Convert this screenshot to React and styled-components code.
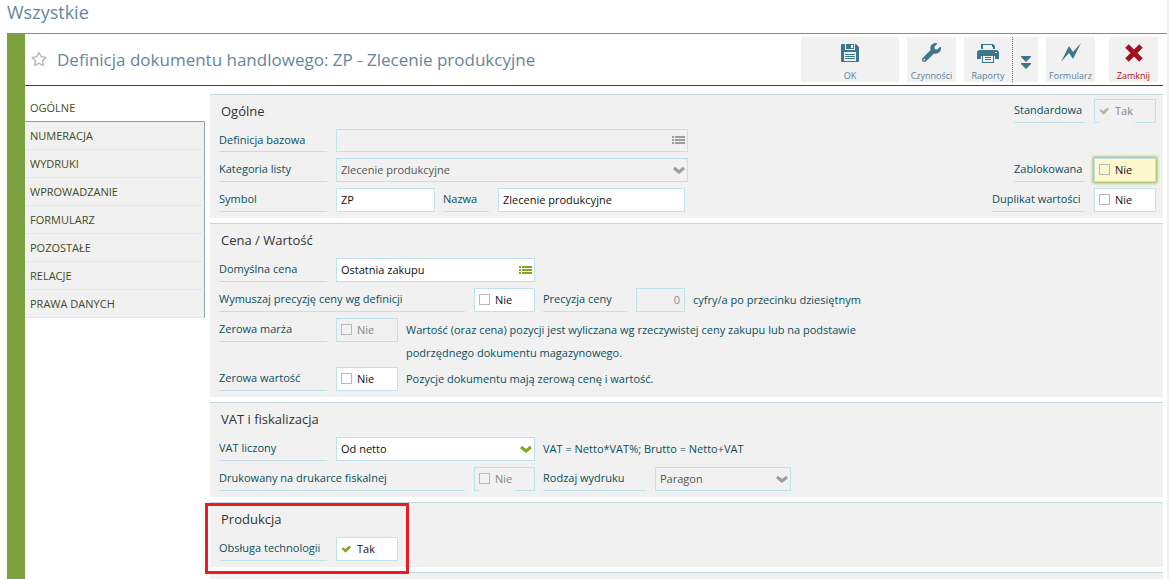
import React, { useState } from "react";
import styled, { createGlobalStyle, css } from "styled-components";
import { FaRegStar, FaWrench } from "react-icons/fa";

const GlobalStyle = createGlobalStyle`
  * {
    box-sizing: border-box;
  }
  body {
    margin: 0;
    background: #fff;
    font-family: "Open Sans", "Noto Sans", sans-serif;
    font-size: 11px;
    color: #0a4f5c;
  }
  button, input, select {
    font: inherit;
    margin: 0;
  }
`;

const Page = styled.div`
  min-height: 100vh;
  display: flex;
  flex-direction: column;
  border-right: 2px solid #f0f0f0;
`;
const PageTitle = styled.h1`
  margin: 0;
  height: 33px;
  padding-left: 7px;
  font-size: 18px;
  line-height: 25px;
  font-weight: 400;
  color: #6487a0;
`;
const Window = styled.main`
  flex: 1;
  display: flex;
  flex-direction: column;
  margin-left: 7px;
  border-top: 1px solid #7ba23f;
  border-left: 18px solid #7ba23f;
`;
const Header = styled.header`
  display: flex;
  align-items: center;
  height: 52px;
  margin-right: 4px;
  padding: 0 5px 0 6px;
  border-bottom: 1px solid #3c4a1e;
`;
const StarButton = styled.button`
  display: flex;
  padding: 0 0 2px;
  border: 0;
  background: none;
  color: #b4b4b4;
`;
const DocTitle = styled.h2`
  flex: 1;
  margin: 0 0 0 10px;
  font-size: 17px;
  font-weight: 400;
  color: #6487a0;
`;
const Toolbar = styled.div`
  display: flex;
  gap: 8px;
`;
const ToolGroup = styled.div`
  display: flex;
`;
const ToolButton = styled.button`
  width: ${(p) => p.$width || 49}px;
  height: 45px;
  display: flex;
  flex-direction: column;
  align-items: center;
  justify-content: ${(p) => (p.$center ? "center" : "space-between")};
  padding: 6px 0 0;
  margin-left: ${(p) => (p.$apart ? 6 : 0)}px;
  border: 0;
  border-left: ${(p) => (p.$center ? "1px dotted #3d7589" : "0")};
  background: #f1f1f1;
  color: ${(p) => (p.$danger ? "#b01020" : "#5d809a")};
  font-size: 9px;
  line-height: 12px;
  white-space: nowrap;
`;
const Body = styled.div`
  flex: 1;
  display: flex;
  gap: 5px;
  padding: 8px 4px 0 0;
`;
const Tabs = styled.nav`
  width: 180px;
  flex-shrink: 0;
`;
const Tab = styled.a`
  display: block;
  height: 28px;
  padding-left: 5px;
  line-height: 27px;
  color: #3f4a24;
  text-decoration: none;
  border-right: 1px solid #8fa0a8;
  border-bottom: 1px solid #e6e6e6;
  background: #f1f1f1;
  ${(p) =>
    p.$active &&
    css`
      background: #fff;
      border-right-color: #fff;
      border-bottom-color: #8fa0a8;
    `}
`;
const Form = styled.form`
  flex: 1;
  display: flex;
  flex-direction: column;
  gap: 5px;
`;
const Section = styled.section`
  position: relative;
  display: flex;
  flex-direction: column;
  gap: 6px;
  flex-grow: ${(p) => (p.$fill ? 1 : 0)};
  padding: ${(p) => (p.$fill ? "0" : "4px 7px 6px 9px")};
  border-top: 1px solid #c5d8de;
  background: #f1f1f1;
`;
const Row = styled.div`
  display: flex;
  align-items: flex-start;
  gap: 8px;
`;
const SectionTitle = styled.h3`
  margin: 0;
  padding-left: 2px;
  font-size: 13px;
  line-height: 24px;
  font-weight: 400;
  color: #333;
`;
const FieldLabel = styled.label`
  width: ${(p) => p.$width || 108}px;
  height: ${(p) => (p.$short ? 23 : 24)}px;
  margin-left: ${(p) => (p.$right ? "auto" : "0")};
  margin-right: 1px;
  line-height: 22px;
  border-bottom: 1px solid #bfe3e8;
  white-space: nowrap;
`;
const Note = styled.p`
  margin: 0 0 ${(p) => (p.$long ? -3 : 0)}px;
  max-width: 470px;
  line-height: 23px;
`;
const boxed = css`
  height: ${(p) => (p.$short ? 23 : 24)}px;
  border: 1px solid #bfe3e8;
  border-radius: 0;
  background: #fff;
  color: #111;
  opacity: 1;
  outline: 0;
`;
const TextInput = styled.input`
  ${boxed}
  width: ${(p) => p.$width}px;
  padding: 0 4px 2px;
  text-align: ${(p) => p.$align || "left"};
  &:disabled {
    background: #f1f1f1;
    color: #8c8c8c;
  }
`;
const Select = styled.select`
  ${boxed}
  appearance: none;
  width: ${(p) => p.$width}px;
  padding: 0 4px 2px;
  &:disabled {
    background: #f1f1f1;
    color: #555;
  }
`;
const Picker = styled.div`
  position: relative;
  display: flex;
`;
const PickerIcon = styled.span`
  position: absolute;
  right: 3px;
  top: 0;
  bottom: 0;
  display: flex;
  align-items: center;
  pointer-events: none;
  color: ${(p) => (p.$muted ? "#9c9c9c" : "#7da821")};
`;
const CheckBox = styled.label`
  ${boxed}
  position: relative;
  display: flex;
  align-items: center;
  gap: 5px;
  width: ${(p) => p.$width || 62}px;
  padding: 0 0 1px 4px;
  line-height: 14px;
  ${(p) =>
    p.$muted &&
    css`
      background: #f1f1f1;
      color: #858585;
    `}
  ${(p) =>
    p.$marked &&
    css`
      background: #fff8cf;
      box-shadow: 0 0 3px 1px #8ab536;
    `}
  ${(p) =>
    p.$cut &&
    css`
      &::after {
        content: "";
        position: absolute;
        left: 4px;
        bottom: -1px;
        width: 36px;
        height: 1px;
        background: #f1f1f1;
      }
    `}
`;
const Tick = styled.input`
  appearance: none;
  flex-shrink: 0;
  width: 11px;
  height: 11px;
  border: 1px solid #b8b8b8;
  &:checked {
    border: 0;
    background: #7da821;
    clip-path: polygon(4% 52%, 20% 38%, 40% 54%, 76% 22%, 92% 38%, 42% 88%);
  }
  &:checked:disabled {
    background: #b4b4b4;
  }
`;
const Highlight = styled.div`
  position: absolute;
  z-index: 1;
  top: 0;
  left: -5px;
  width: 204px;
  height: 71px;
  border: 3px solid #ed1c24;
  pointer-events: none;
`;

const SaveIcon = () => (
  <svg width="20" height="20" viewBox="0 0 20 20">
    <path fill="#3d7589" d="M1 2q0-1 1-1h14l3 3v14q0 1-1 1H2q-1 0-1-1z" />
    <path fill="#f1f1f1" d="M5 1h10v6H5zM4 9h12v9H4z" />
    <path
      fill="#3d7589"
      d="M6 1h8v5H6zM5 11h10v1H5zM5 13h10v1H5zM5 15h10v1H5z"
    />
    <path fill="#f1f1f1" d="M11 2h2v3h-2z" />
  </svg>
);
const PrintIcon = () => (
  <svg width="22" height="20" viewBox="0 0 22 20">
    <path
      fill="#3d7589"
      d="M4 1h12l2 2v3H4zM3 7h16q3 0 3 3v6h-4v-3H4v3H0v-6q0-3 3-3zM5 12h12v8H5z"
    />
    <path
      fill="#f1f1f1"
      d="M6 2h9v2h1v2H6zM6 13h10v6H6zM18 9h2v1h-2z"
    />
    <path fill="#3d7589" d="M8 14h6v1H8zM8 16h6v1H8z" />
  </svg>
);
const DoubleDownIcon = () => (
  <svg width="10" height="14" viewBox="0 0 10 14">
    <path fill="#3d7589" d="M0 0h10v1L5 6 0 1zM0 7h10v1l-5 5-5-5z" />
  </svg>
);
const BoltIcon = () => (
  <svg width="20" height="20" viewBox="0 0 20 20">
    <path fill="#3d7589" d="M0 19 8 3l4 6 8-9-8 16-4-6z" />
  </svg>
);
const CloseIcon = () => (
  <svg width="20" height="20" viewBox="0 0 20 20">
    <path d="M3 3l14 14M17 3 3 17" stroke="#a0141e" strokeWidth="5" />
  </svg>
);
const ListIcon = () => (
  <svg width="13" height="9" viewBox="0 0 13 9" fill="currentColor">
    <path d="M0 0h2v2H0zM3 0h10v2H3zM0 3h2v2H0zM3 3h10v2H3zM0 6h2v2H0zM3 6h10v2H3z" />
  </svg>
);
const ChevronIcon = () => (
  <svg width="12" height="8" viewBox="0 0 12 8">
    <path d="M1 2l5 4 5-4" fill="none" stroke="currentColor" strokeWidth="3" />
  </svg>
);

const Check = ({ id, checked = false, disabled = false, ...rest }) => {
  const [on, setOn] = useState(checked);

  return (
    <CheckBox $muted={disabled} {...rest}>
      <Tick
        id={id}
        type="checkbox"
        checked={on}
        disabled={disabled}
        onChange={(e) => setOn(e.target.checked)}
      />
      {on ? "Tak" : "Nie"}
    </CheckBox>
  );
};

const Dropdown = ({ id, width, value, disabled }) => (
  <Picker>
    <Select id={id} $width={width} defaultValue={value} disabled={disabled}>
      <option>{value}</option>
    </Select>
    <PickerIcon $muted={disabled}>
      <ChevronIcon />
    </PickerIcon>
  </Picker>
);

const Lookup = ({ id, width, value, disabled, short }) => (
  <Picker>
    <TextInput
      id={id}
      $width={width}
      $short={short}
      defaultValue={value}
      disabled={disabled}
    />
    <PickerIcon $muted={disabled}>
      <ListIcon />
    </PickerIcon>
  </Picker>
);

const tabs = [
  "OGÓLNE",
  "NUMERACJA",
  "WYDRUKI",
  "WPROWADZANIE",
  "FORMULARZ",
  "POZOSTAŁE",
  "RELACJE",
  "PRAWA DANYCH",
];

const App = () => {
  const [active, setActive] = useState(tabs[0]);

  return (
    <Page>
      <GlobalStyle />
      <PageTitle>Wszystkie</PageTitle>
      <Window>
        <Header>
          <StarButton type="button" aria-label="Ulubione">
            <FaRegStar size={16} />
          </StarButton>
          <DocTitle>
            Definicja dokumentu handlowego: ZP - Zlecenie produkcyjne
          </DocTitle>
          <Toolbar>
            <ToolButton type="button" $width={98}>
              <SaveIcon />
              OK
            </ToolButton>
            <ToolButton type="button">
              <FaWrench size={19} color="#3d7589" />
              Czynności
            </ToolButton>
            <ToolGroup>
              <ToolButton type="button" $width={48}>
                <PrintIcon />
                Raporty
              </ToolButton>
              <ToolButton type="button" $width={26} $center aria-label="Więcej">
                <DoubleDownIcon />
              </ToolButton>
            </ToolGroup>
            <ToolButton type="button">
              <BoltIcon />
              Formularz
            </ToolButton>
            <ToolButton type="button" $danger $apart>
              <CloseIcon />
              Zamknij
            </ToolButton>
          </Toolbar>
        </Header>
        <Body>
          <Tabs>
            {tabs.map((name) => (
              <Tab
                key={name}
                href="#"
                $active={name === active}
                onClick={() => setActive(name)}
              >
                {name}
              </Tab>
            ))}
          </Tabs>
          <Form>
            <Section>
              <Row>
                <SectionTitle>Ogólne</SectionTitle>
                <FieldLabel htmlFor="standard" $width={71} $right>
                  Standardowa
                </FieldLabel>
                <Check id="standard" checked disabled $cut />
              </Row>
              <Row>
                <FieldLabel htmlFor="base" $short>
                  Definicja bazowa
                </FieldLabel>
                <Lookup id="base" width={352} value="" disabled short />
              </Row>
              <Row>
                <FieldLabel htmlFor="category">Kategoria listy</FieldLabel>
                <Dropdown
                  id="category"
                  width={352}
                  value="Zlecenie produkcyjne"
                  disabled
                />
                <FieldLabel htmlFor="blocked" $width={71} $right>
                  Zablokowana
                </FieldLabel>
                <Check id="blocked" $marked />
              </Row>
              <Row>
                <FieldLabel htmlFor="symbol">Symbol</FieldLabel>
                <TextInput id="symbol" $width={99} defaultValue="ZP" />
                <FieldLabel htmlFor="name" $width={46}>
                  Nazwa
                </FieldLabel>
                <TextInput
                  id="name"
                  $width={187}
                  defaultValue="Zlecenie produkcyjne"
                />
                <FieldLabel htmlFor="duplicate" $width={93} $right>
                  Duplikat wartości
                </FieldLabel>
                <Check id="duplicate" />
              </Row>
            </Section>

            <Section>
              <SectionTitle>Cena / Wartość</SectionTitle>
              <Row>
                <FieldLabel htmlFor="price">Domyślna cena</FieldLabel>
                <Lookup id="price" width={199} value="Ostatnia zakupu" />
              </Row>
              <Row>
                <FieldLabel htmlFor="force" $width={246}>
                  Wymuszaj precyzję ceny wg definicji
                </FieldLabel>
                <Check id="force" $width={61} />
                <FieldLabel htmlFor="precision" $width={84}>
                  Precyzja ceny
                </FieldLabel>
                <TextInput
                  id="precision"
                  $width={49}
                  $align="right"
                  defaultValue="0"
                  disabled
                />
                <Note>cyfry/a po przecinku dziesiętnym</Note>
              </Row>
              <Row>
                <FieldLabel htmlFor="margin">Zerowa marża</FieldLabel>
                <Check id="margin" disabled />
                <Note $long>
                  Wartość (oraz cena) pozycji jest wyliczana wg rzeczywistej
                  ceny zakupu lub na podstawie podrzędnego dokumentu
                  magazynowego.
                </Note>
              </Row>
              <Row>
                <FieldLabel htmlFor="zero">Zerowa wartość</FieldLabel>
                <Check id="zero" />
                <Note>Pozycje dokumentu mają zerową cenę i wartość.</Note>
              </Row>
            </Section>

            <Section>
              <SectionTitle>VAT i fiskalizacja</SectionTitle>
              <Row>
                <FieldLabel htmlFor="vat">VAT liczony</FieldLabel>
                <Dropdown id="vat" width={199} value="Od netto" />
                <Note>VAT = Netto*VAT%; Brutto = Netto+VAT</Note>
              </Row>
              <Row>
                <FieldLabel htmlFor="fiscal" $width={246}>
                  Drukowany na drukarce fiskalnej
                </FieldLabel>
                <Check id="fiscal" $width={61} disabled $cut />
                <FieldLabel htmlFor="print" $width={103}>
                  Rodzaj wydruku
                </FieldLabel>
                <Dropdown id="print" width={136} value="Paragon" disabled />
              </Row>
            </Section>

            <Section>
              <SectionTitle>Produkcja</SectionTitle>
              <Row>
                <FieldLabel htmlFor="technology">Obsługa technologii</FieldLabel>
                <Check id="technology" checked />
              </Row>
              <Highlight />
            </Section>

            <Section $fill />
          </Form>
        </Body>
      </Window>
    </Page>
  );
};

export default App;
